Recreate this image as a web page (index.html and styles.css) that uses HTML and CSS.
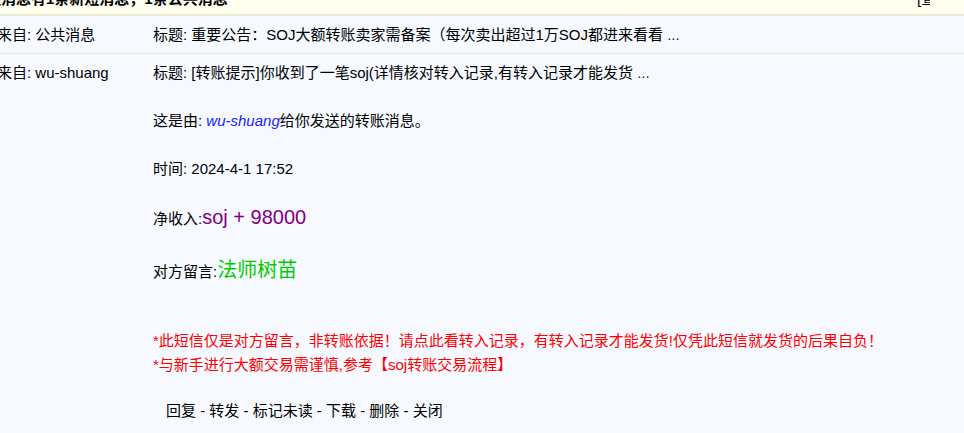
FILE: index.html
```html
<!DOCTYPE html>
<html lang="zh">
<head>
<meta charset="utf-8">
<link rel="stylesheet" href="styles.css">
</head>
<body>
<div class="page">
  <div class="topbar">
    <span class="top-title">短消息有1条新短消息，1条公共消息</span>
    <span class="top-link">[查看全部]</span>
  </div>
  <div class="row row-first">
    <div class="from">来自: 公共消息</div>
    <div class="body">
      <div class="line">标题: 重要公告：SOJ大额转账卖家需备案（每次卖出超过1万SOJ都进来看看 <span class="dots">...</span></div>
    </div>
  </div>
  <div class="row">
    <div class="from">来自: wu-shuang</div>
    <div class="body">
      <div class="line">标题: [转账提示]你收到了一笔soj(详情核对转入记录,有转入记录才能发货 <span class="dots">...</span></div>
      <div class="line gap">这是由: <a class="user">wu-shuang</a>给你发送的转账消息。</div>
      <div class="line gap">时间: 2024-4-1 17:52</div>
      <div class="line gap">净收入:<span class="amount">soj + 98000</span></div>
      <div class="line gap-note">对方留言:<span class="note">法师树苗</span></div>
      <div class="warn first-warn">*此短信仅是对方留言，非转账依据！请点此看转入记录，有转入记录才能发货!仅凭此短信就发货的后果自负！</div>
      <div class="warn">*与新手进行大额交易需谨慎,参考【soj转账交易流程】</div>
      <div class="actions">回复 - 转发 - 标记未读 - 下载 - 删除 - 关闭</div>
    </div>
  </div>
</div>
</body>
</html>
```
FILE: styles.css
```css
html, body {
  margin: 0;
  padding: 0;
  background: #f6f9ff;
  overflow: hidden;
}
body {
  font-family: "Liberation Sans", Arial, "Noto Sans CJK SC", sans-serif;
  font-size: 15px;
  color: #000;
}
.page {
  width: 964px;
  height: 433px;
  overflow: hidden;
}
.topbar {
  margin-top: -19px;
  height: 33px;
  background: #fffff0;
  border-bottom: 2px solid #ecebd2;
  display: flex;
  align-items: center;
  justify-content: space-between;
  font-weight: bold;
  white-space: nowrap;
  overflow: hidden;
}
.top-title {
  margin-left: -14px;
}
.top-link {
  font-weight: normal;
  width: 13px;
  margin-right: 34px;
  overflow: hidden;
}
.row {
  display: grid;
  grid-template-columns: 156px 1fr;
  margin-left: -3px;
}
.row-first {
  height: 37px;
  align-items: center;
  border-bottom: 1px solid #ecebd2;
}
.row:not(.row-first) {
  padding-top: 7px;
}
.from {
  line-height: 24px;
  white-space: nowrap;
}
.row-first .from, .row-first .line {
  line-height: 36px;
}
.line {
  line-height: 24px;
  white-space: nowrap;
}
.gap {
  margin-top: 24px;
}
.gap-note {
  margin-top: 27px;
}
.dots {
  color: #1c1c6a;
}
.user {
  color: #2020ff;
  font-style: italic;
}
.amount {
  color: #800080;
  font-size: 20px;
}
.note {
  color: #00cc00;
  font-size: 20px;
}
.warn {
  color: #ff0000;
  line-height: 24px;
  white-space: nowrap;
}
.first-warn {
  margin-top: 45px;
}
.actions {
  margin-top: 22px;
  padding-left: 13px;
  line-height: 24px;
}
```
